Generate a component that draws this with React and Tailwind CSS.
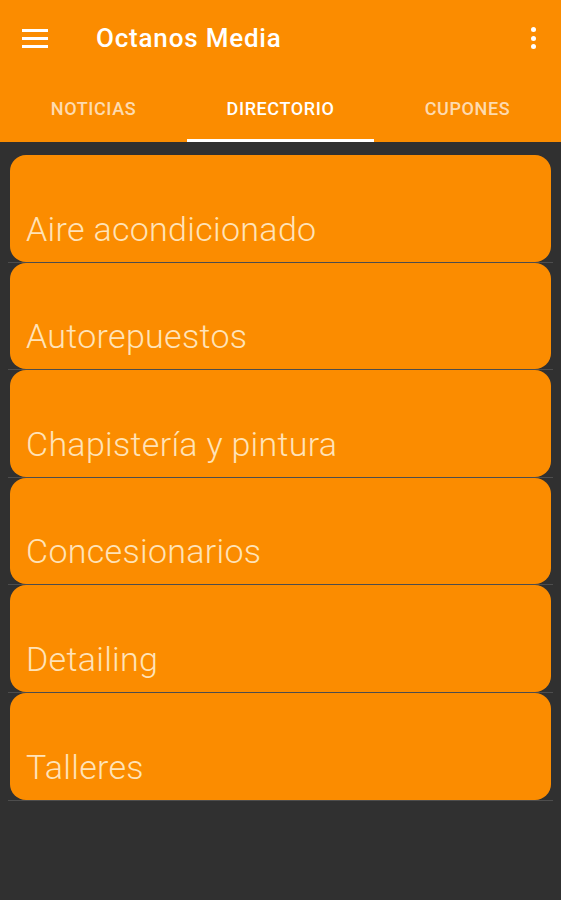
import React from "react";

const items = [
  "Aire acondicionado",
  "Autorepuestos",
  "Chapistería y pintura",
  "Concesionarios",
  "Detailing",
  "Talleres",
];

export default function App() {
  return (
    <div
      className="w-[561px] h-[900px] bg-[#303030] flex flex-col overflow-hidden"
      style={{ fontFamily: "Roboto, 'Noto Sans', sans-serif" }}
    >
      <div className="bg-[#fb8c00] flex flex-col">
        <div className="h-[76px] flex items-center pl-[22px] pr-[22px]">
          <svg width="26" height="20" viewBox="0 0 26 20" className="mt-[-1px]">
            <rect x="0" y="1" width="26" height="3" fill="#fff" />
            <rect x="0" y="9" width="26" height="3" fill="#fff" />
            <rect x="0" y="17" width="26" height="3" fill="#fff" />
          </svg>
          <div className="ml-[48px] text-white text-[26px] tracking-[0.8px] font-medium leading-none mt-[-1px]">
            Octanos Media
          </div>
          <div className="ml-auto flex flex-col gap-[3.5px] mr-[3px]">
            <span className="block w-[5px] h-[5px] rounded-full bg-white" />
            <span className="block w-[5px] h-[5px] rounded-full bg-white" />
            <span className="block w-[5px] h-[5px] rounded-full bg-white" />
          </div>
        </div>
        <div className="flex h-[66px]">
          {["NOTICIAS", "DIRECTORIO", "CUPONES"].map((t, i) => (
            <div key={t} className="flex-1 flex flex-col">
              <div
                className={`flex-1 flex items-center justify-center text-[18px] tracking-[0.6px] font-medium pt-[2px] ${
                  i === 1 ? "text-white" : "text-white/70"
                }`}
              >
                {t}
              </div>
              <div className={`h-[3px] ${i === 1 ? "bg-white" : "bg-transparent"}`} />
            </div>
          ))}
        </div>
      </div>
      <div className="flex flex-col pt-[13px]">
        {items.map((t) => (
          <div key={t} className="flex flex-col">
            <div className="mx-[10px] h-[106.6px] bg-[#fb8c00] rounded-[16px] flex items-end pl-[16px] pb-[15px]">
              <span className="text-[34px] tracking-[0.3px] leading-[36px] font-light text-[#ffe3b8]">{t}</span>
            </div>
            <div className="mx-[8px] h-[1px] bg-[#4d4d4d]" />
          </div>
        ))}
      </div>
    </div>
  );
}
